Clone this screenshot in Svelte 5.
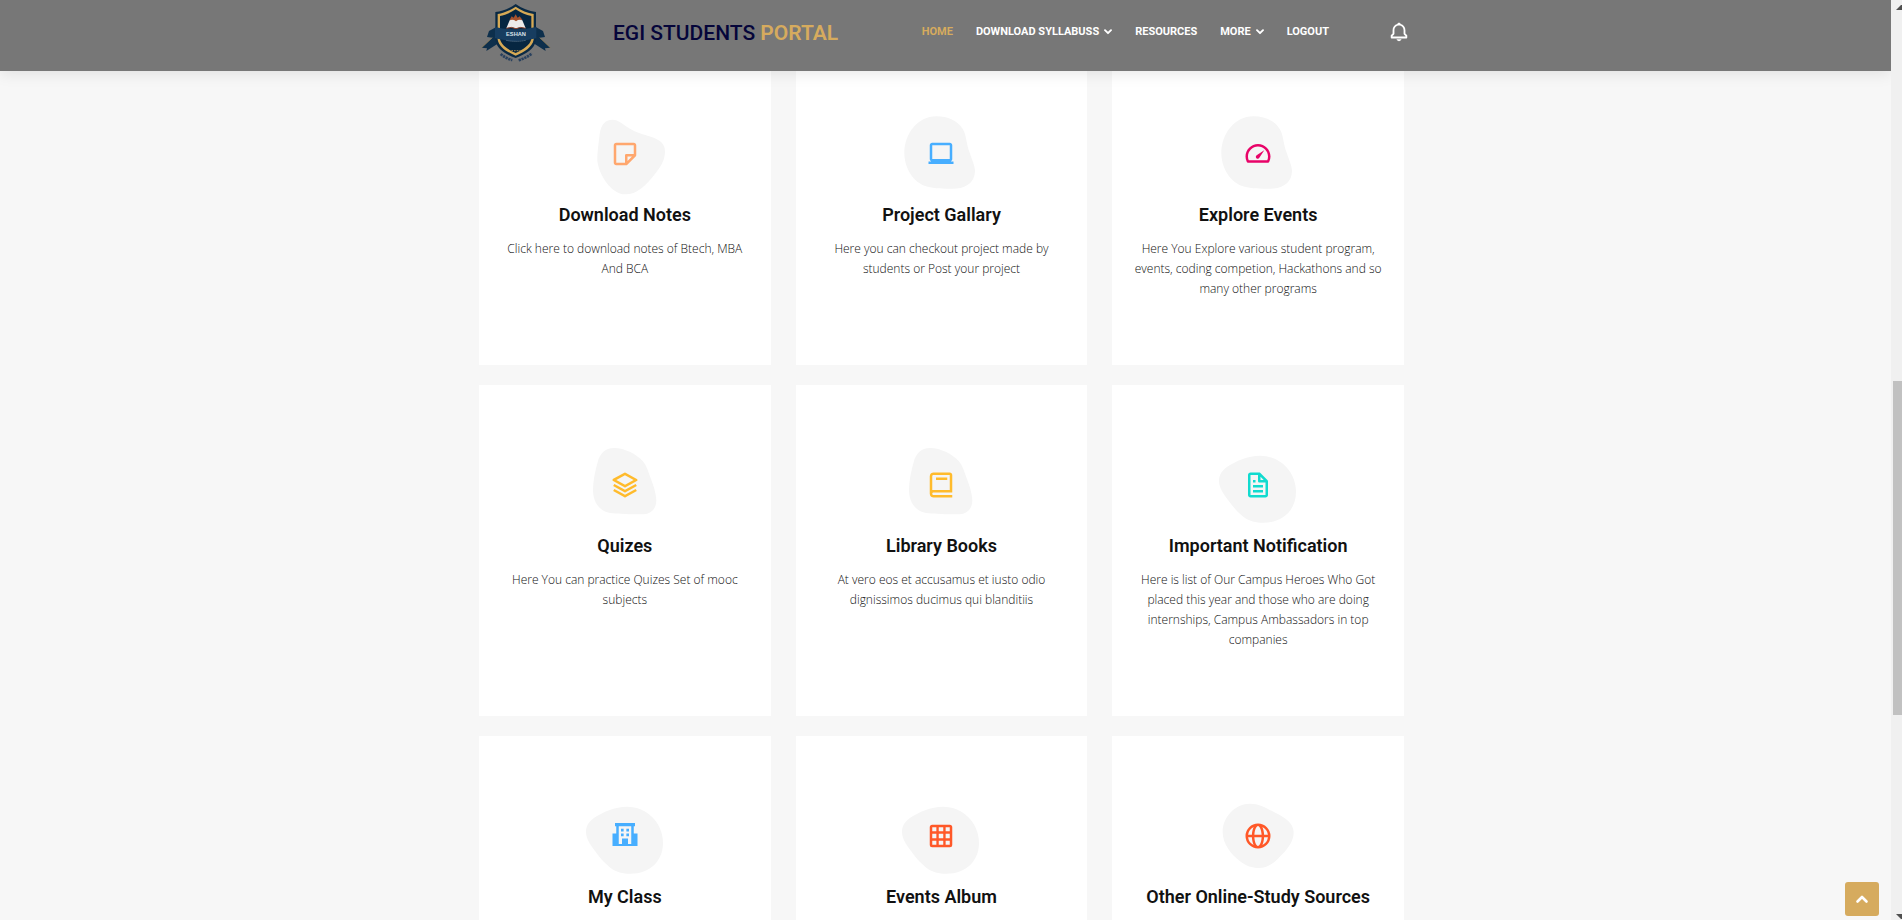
<script>
  const blobs = {
    kite: 'M-37,-103 C-60,-103 -72,-88 -76,-60 C-79,-30 -84,-5 -83,20 C-80,55 -45,121 2,121 C35,121 60,97 85,66 C105,42 120,22 120,-8 C120,-35 98,-46 70,-54 C45,-61 28,-66 3,-83 C-12,-94 -22,-103 -37,-103Z',
    pebble: 'M-14,-113 C-70,-113 -110,-60 -110,-3 C-110,40 -85,82 -50,95 C-30,102 0,104 25,104 C45,105 62,104 78,94 C95,84 102,68 102,48 C100,30 90,10 83,-12 C76,-35 75,-60 65,-75 C50,-100 20,-113 -14,-113Z',
    shell: 'M-33,-111 C-60,-111 -76,-93 -82,-68 C-90,-40 -96,-10 -96,15 C-96,50 -77,79 -45,84 C-20,87 20,88 50,88 C78,88 94,72 94,45 C93,25 85,0 77,-20 C71,-38 66,-55 55,-70 C35,-92 0,-111 -33,-111Z',
    drop: 'M6,-88 C-30,-88 -68,-71 -90,-56 C-107,-44 -117,-32 -117,-12 C-117,8 -103,28 -90,45 C-75,66 -60,83 -44,95 C-28,108 -5,113 16,113 C75,113 114,75 114,20 C114,-40 65,-88 6,-88Z',
    round: 'M-24,-97 C-68,-97 -106,-58 -106,-12 C-106,25 -80,55 -55,75 C-35,90 -18,96 2,96 C25,96 45,84 62,66 C85,43 107,20 107,-11 C107,-40 80,-56 52,-70 C25,-83 5,-97 -24,-97Z'
  };

  const icons = {
    note: 'M19 3H5c-1.103 0-2 .897-2 2v14c0 1.103.897 2 2 2h8a.996.996 0 0 0 .707-.293l7-7a.997.997 0 0 0 .196-.293c.014-.03.022-.061.033-.093a.991.991 0 0 0 .051-.259c.002-.021.013-.041.013-.062V5c0-1.103-.897-2-2-2zM5 5h14v7h-6a1 1 0 0 0-1 1v6H5V5zm9 12.586V14h3.586L14 17.586z',
    laptop: 'M20 17.722c.595-.347 1-.985 1-1.722V5c0-1.103-.897-2-2-2H5c-1.103 0-2 .897-2 2v11c0 .736.405 1.375 1 1.722V18H2v2h20v-2h-2v-.278zM5 16V5h14l.002 11H5z',
    meter: 'M12 4C6.486 4 2 8.486 2 14a9.89 9.89 0 0 0 1.051 4.445c.17.34.516.555.895.555h16.107c.379 0 .726-.215.896-.555A9.89 9.89 0 0 0 22 14c0-5.514-4.486-10-10-10zm7.41 13H4.59A7.875 7.875 0 0 1 4 14c0-4.411 3.589-8 8-8s8 3.589 8 8a7.875 7.875 0 0 1-.59 3zM10.939 12.939a1.53 1.53 0 0 0 0 2.561 1.53 1.53 0 0 0 2.121-.44l3.962-6.038a.034.034 0 0 0 0-.035.033.033 0 0 0-.045-.01l-6.038 3.962z',
    layers: 'M21.484 7.125l-9.022-5a1.003 1.003 0 0 0-.968 0l-8.978 4.96a1 1 0 0 0-.003 1.748l9.022 5.04a.995.995 0 0 0 .973.001l8.978-5a1 1 0 0 0-.002-1.749zm-9.461 4.73-6.964-3.89 6.917-3.822 6.964 3.859-6.917 3.853zM12 15.856l-8.515-4.73-.971 1.748 9 5a1 1 0 0 0 .971 0l9-5-.971-1.748L12 15.856zM12 19.856l-8.515-4.73-.971 1.748 9 5a1 1 0 0 0 .971 0l9-5-.971-1.748L12 19.856z',
    book: 'M6 22h15v-2H6.012C5.55 19.988 5 19.805 5 19s.55-.988 1.012-1H21V4c0-1.103-.897-2-2-2H6c-1.206 0-3 .799-3 3v14c0 2.201 1.794 3 3 3zM5 8V5c0-.805.55-.988 1-1h13v12H5V8zM8 6h9v2H8z',
    file: 'M19.903 8.586a.997.997 0 0 0-.196-.293l-6-6a.997.997 0 0 0-.293-.196c-.03-.014-.062-.022-.094-.033a.991.991 0 0 0-.259-.051C13.04 2.011 13.021 2 13 2H6c-1.103 0-2 .897-2 2v16c0 1.103.897 2 2 2h12c1.103 0 2-.897 2-2V9c0-.021-.011-.04-.013-.062a.952.952 0 0 0-.051-.259c-.01-.032-.019-.063-.033-.093zM16.586 8H14V5.414L16.586 8zM6 20V4h6v5a1 1 0 0 0 1 1h5l.002 10H6zM8 12h8v2H8zm0 4h8v2H8zm0-8h2v2H8z',
    building: 'M4 1.600H20V4.200H19V10H22V20H2V10H5V4.200H4zM7 4.200V18.400H9.600V14H14.400V18.400H17V4.200zM8.800 6.200H10.900V8.400H8.800zM13.100 6.200H15.200V8.400H13.100zM8.800 10H10.900V12.200H8.800zM13.100 10H15.200V12.200H13.100z',
    grid: 'M5 3H19a2 2 0 0 1 2 2V19a2 2 0 0 1-2 2H5a2 2 0 0 1-2-2V5a2 2 0 0 1 2-2zM5 5V8.200H8.300V5zM10.200 5V8.200H13.800V5zM15.700 5V8.200H19V5zM5 10.200V13.800H8.300V10.200zM10.200 10.200V13.800H13.800V10.200zM15.700 10.200V13.800H19V10.200zM5 15.800V19H8.300V15.800zM10.200 15.800V19H13.800V15.800zM15.700 15.800V19H19V15.800z',
    globe: 'M12 2a10 10 0 1 0 0 20a10 10 0 1 0 0-20zM19.930 11H16.900C16.800 8.700 16.300 6.600 15.500 4.800A8 8 0 0 1 19.930 11zM12 4C13.200 4 14.700 6.900 14.900 11H9.100C9.300 6.900 10.800 4 12 4zM8.500 4.800C7.700 6.600 7.200 8.700 7.100 11H4.070A8 8 0 0 1 8.500 4.800zM4.070 13H7.100C7.200 15.300 7.700 17.400 8.500 19.200A8 8 0 0 1 4.070 13zM12 20C10.800 20 9.300 17.100 9.100 13H14.900C14.700 17.100 13.200 20 12 20zM15.500 19.200C16.300 17.400 16.800 15.300 16.900 13H19.930A8 8 0 0 1 15.500 19.200z'
  };

  const services = [
    { title: 'Download Notes', text: 'Click here to download notes of Btech, MBA And BCA', icon: 'note', blob: 'kite', color: '#ffa76e' },
    { title: 'Project Gallary', text: 'Here you can checkout project made by students or Post your project', icon: 'laptop', blob: 'pebble', color: '#47aeff' },
    { title: 'Explore Events', text: 'Here You Explore various student program, events, coding competion, Hackathons and so many other programs', icon: 'meter', blob: 'pebble', color: '#e80368' },
    { title: 'Quizes', text: 'Here You can practice Quizes Set of mooc subjects', icon: 'layers', blob: 'shell', color: '#ffbb2c' },
    { title: 'Library Books', text: 'At vero eos et accusamus et iusto odio dignissimos ducimus qui blanditiis', icon: 'book', blob: 'shell', color: '#ffbb2c' },
    { title: 'Important Notification', text: 'Here is list of Our Campus Heroes Who Got placed this year and those who are doing internships, Campus Ambassadors in top companies', icon: 'file', blob: 'drop', color: '#11dbcf' },
    { title: 'My Class', icon: 'building', blob: 'drop', color: '#47aeff' },
    { title: 'Events Album', icon: 'grid', blob: 'drop', color: '#ff5828' },
    { title: 'Other Online-Study Sources', icon: 'globe', blob: 'round', color: '#ff5828' }
  ];

  const links = [
    { label: 'Home', active: true },
    { label: 'Download Syllabuss', menu: true },
    { label: 'Resources' },
    { label: 'More', menu: true },
    { label: 'Logout' }
  ];
</script>

<div class="window">
  <div class="page">
    <header>
      <div class="bar">
        <a class="logo" href="#home" aria-label="Home">
          <svg width="70" height="61" viewBox="0 0 210 183">
            <path d="M46 72 L24 84 L18 102 L34 104 L2 134 L18 136 L16 144 L50 122 Z" fill="#0d2f4c" />
            <path d="M164 72 L186 84 L192 102 L176 104 L208 134 L192 136 L194 144 L160 122 Z" fill="#0d2f4c" />
            <path d="M34 104 L2 134 M176 104 L208 134" stroke="#9a8250" stroke-width="2" fill="none" />
            <path d="M104 3 C86 16 64 25 43 27 V112 C47 138 74 154 104 165 C134 154 161 138 165 112 V27 C144 25 122 16 104 3Z" fill="#0a2a45" />
            <path d="M104 11 C88 22 68 30 50 33 V110 C54 132 78 147 104 158 C130 147 154 132 158 110 V33 C140 30 120 22 104 11Z" fill="#d5a955" />
            <path d="M104 19 C90 29 73 36 57 39 V108 C61 127 82 140 104 150 C126 140 147 127 151 108 V39 C135 36 118 29 104 19Z" fill="#062641" />
            <path d="M86 50 L92 40 L98 44 L104 34 L110 44 L116 40 L124 50 L118 56 H90Z" fill="#a4512c" />
            <path d="M76 76 L86 52 Q96 48 105 55 Q114 48 124 52 L134 76 Q118 70 105 77 Q92 70 76 76Z" fill="#eceaea" />
            <path d="M76 76 Q92 70 105 77 Q118 70 134 76" fill="none" stroke="#8c3f2a" stroke-width="3" />
            <path d="M42 72 Q104 86 166 72 V106 Q104 122 42 106Z" fill="#173d60" />
            <text x="105" y="98" text-anchor="middle" font-family="Liberation Sans, sans-serif" font-size="17" font-weight="700" fill="#dbe3ea">ESHAN</text>
            <path d="M76 112 Q104 118 134 112" stroke="#557089" stroke-width="3" stroke-dasharray="4 2" fill="none" />
            <path d="M91 143 H119" stroke="#a98a4d" stroke-width="3" stroke-dasharray="5 3" fill="none" />
            <path d="M59 153 Q75 167 94 171" stroke="#29415e" stroke-width="8" stroke-dasharray="7 2" fill="none" />
            <path d="M113 172 Q135 165 153 151" stroke="#29415e" stroke-width="8" stroke-dasharray="7 2" fill="none" />
          </svg>
        </a>
        <h1>EGI STUDENTS <span>PORTAL</span></h1>
        <nav>
          {#each links as link}
            <a href="#{link.label.toLowerCase().replace(' ', '-')}" class:active={link.active}>
              {link.label}
              {#if link.menu}
                <svg width="8" height="6" viewBox="0 0 8 6"><path d="M1 1.200 L4 4.200 L7 1.200" fill="none" stroke="currentColor" stroke-width="1.900" stroke-linecap="round" stroke-linejoin="round" /></svg>
              {/if}
            </a>
          {/each}
        </nav>
        <button class="bell" aria-label="Notifications">
          <svg width="22" height="22" viewBox="0 0 24 24" fill="currentColor"><path d="M19 13.586V10c0-3.217-2.185-5.927-5.145-6.742C13.562 2.520 12.846 2 12 2s-1.562.52-1.855 1.258C7.185 4.074 5 6.783 5 10v3.586l-1.707 1.707A.996.996 0 0 0 3 16v2a1 1 0 0 0 1 1h16a1 1 0 0 0 1-1v-2a.996.996 0 0 0-.293-.707L19 13.586zM19 17H5v-.586l1.707-1.707A.996.996 0 0 0 7 14v-4c0-2.757 2.243-5 5-5s5 2.243 5 5v4c0 .266.105.52.293.707L19 16.414V17zm-7 5a2.980 2.980 0 0 0 2.818-2H9.182A2.980 2.980 0 0 0 12 22z" /></svg>
        </button>
      </div>
    </header>

    <main>
      <div class="grid">
        {#each services as item}
          <article>
            <div class="icon" style:color={item.color}>
              <svg class="blob" width="84" height="84" viewBox="-126 -126 252 252"><path d={blobs[item.blob]} /></svg>
              <svg class="glyph" width="30" height="30" viewBox="0 0 24 24"><path fill-rule={item.icon === 'building' || item.icon === 'grid' || item.icon === 'globe' ? 'evenodd' : 'nonzero'} d={icons[item.icon]} /></svg>
            </div>
            <h2><a href="#{item.icon}">{item.title}</a></h2>
            {#if item.text}<p>{item.text}</p>{/if}
          </article>
        {/each}
      </div>
    </main>

    <button class="to-top" aria-label="Back to top">
      <svg width="14" height="10" viewBox="0 0 14 10"><path d="M2.500 7.500 L7 3 L11.500 7.500" fill="none" stroke="#fff" stroke-width="2.600" stroke-linecap="round" stroke-linejoin="round" /></svg>
    </button>
  </div>

  <div class="scrollbar" aria-hidden="true">
    <svg width="6" height="5" viewBox="0 0 6 5"><path d="M0 5 L5 0 H6 V5Z" fill="#505050" /></svg>
    <div class="track"><div class="thumb"></div></div>
    <svg width="6" height="5" viewBox="0 0 6 5"><path d="M0 0 L5 5 H6 V0Z" fill="#505050" /></svg>
  </div>
</div>

<style>
  :global(body) {
    margin: 0;
    background: #f7f7f7;
  }

  .window {
    display: flex;
    height: 100vh;
    overflow: hidden;
    font-family: 'Open Sans', sans-serif;
    color: #111;
  }

  .page {
    position: relative;
    flex: 1;
    min-width: 0;
    overflow: hidden;
    background: #f7f7f7;
  }

  header {
    position: absolute;
    inset: 0 0 auto 0;
    z-index: 2;
    height: 71px;
    background: #777;
    box-shadow: 0 2px 15px rgba(0, 0, 0, 0.1);
  }

  .bar {
    display: flex;
    align-items: center;
    max-width: 929px;
    height: 66px;
    margin: 0 auto;
  }

  .logo {
    display: flex;
    margin-right: 62px;
  }

  h1 {
    flex: 1;
    margin: 0;
    font: 500 21px/24px Roboto, sans-serif;
    color: #05053a;
    white-space: nowrap;
  }

  h1 span {
    font-weight: 600;
    color: #d6ab5e;
  }

  nav {
    display: flex;
    gap: 23px;
    padding-bottom: 3px;
  }

  nav a {
    display: flex;
    align-items: center;
    gap: 5px;
    font: 700 11px/16px Roboto, sans-serif;
    text-transform: uppercase;
    text-decoration: none;
    white-space: nowrap;
    color: #fff;
  }

  nav a.active {
    color: #d6ab5e;
  }

  .bell {
    display: flex;
    margin-left: 59px;
    padding: 0 0 2px;
    border: 0;
    background: none;
    color: #fff;
  }

  main {
    padding: 54px 8px 0 0;
  }

  .grid {
    display: grid;
    grid-template-columns: repeat(3, minmax(0, 1fr));
    gap: 20px 25px;
    max-width: 925px;
    margin: 0 auto;
  }

  article {
    box-sizing: border-box;
    min-height: 311px;
    padding: 66px 20px;
    background: #fff;
    text-align: center;
  }

  .icon {
    display: grid;
    place-items: center;
    height: 67px;
  }

  .icon svg {
    grid-area: 1 / 1;
  }

  .blob {
    margin: -9px 0;
    fill: #f5f5f5;
  }

  .glyph {
    position: relative;
    fill: currentColor;
  }

  h2 {
    margin: 17px 0 13px;
    font: 600 18px/22px Roboto, sans-serif;
  }

  h2 a {
    color: #111;
    text-decoration: none;
  }

  p {
    margin: 0;
    font-size: 12px;
    font-weight: 300;
    line-height: 20px;
  }

  .to-top {
    position: absolute;
    right: 12px;
    bottom: 4px;
    z-index: 3;
    display: grid;
    place-items: center;
    width: 34px;
    height: 34px;
    padding: 0;
    border: 0;
    border-radius: 3px;
    background: #d6ab5e;
  }

  .scrollbar {
    display: flex;
    flex-direction: column;
    align-items: flex-end;
    box-sizing: border-box;
    width: 11px;
    padding: 5px 0 1px;
    background: #f0f0f0;
  }

  .track {
    flex: 1;
    align-self: stretch;
    padding-left: 2px;
  }

  .thumb {
    height: 37%;
    margin-top: 371px;
    background: #c1c1c1;
  }
</style>
